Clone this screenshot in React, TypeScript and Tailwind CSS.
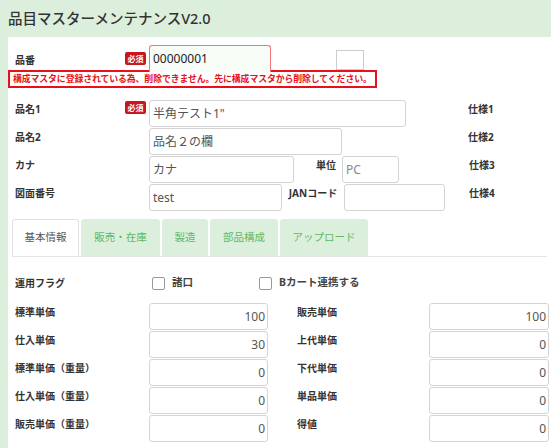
import React from "react";

const F = { fontFamily: '"Noto Sans", "Noto Sans CJK JP", sans-serif' };

function Badge() {
  return (
    <span className="flex h-[13px] w-[21px] items-center justify-center rounded-[2px] bg-[#c8161d] text-[8px] font-bold leading-none text-white">
      必須
    </span>
  );
}

function Input({ w, value, gray, right }: { w: number; value?: string; gray?: boolean; right?: boolean }) {
  return (
    <div
      className={`flex h-[27px] shrink-0 items-center rounded-[3px] border border-[#d4d4d4] bg-white px-[3px] text-[12px] ${
        gray ? "text-[#888]" : "text-[#555]"
      } ${right ? "justify-end pr-[2px]" : ""}`}
      style={{ width: w }}
    >
      {value}
    </div>
  );
}

function Label({ children, w = 110 }: { children: React.ReactNode; w?: number }) {
  return (
    <div className="shrink-0 pt-[2px] text-[10px] font-bold leading-[14px] text-[#333]" style={{ width: w }}>
      {children}
    </div>
  );
}

function Check({ label }: { label: string }) {
  return (
    <div className="flex items-center gap-[7px]">
      <span className="h-[13px] w-[13px] rounded-[2px] border border-[#999] bg-white" />
      <span className="text-[10.5px] font-bold text-[#444]">{label}</span>
    </div>
  );
}

export default function App() {
  const leftPrices: [string, string][] = [
    ["標準単価", "100"],
    ["仕入単価", "30"],
    ["標準単価（重量）", "0"],
    ["仕入単価（重量）", "0"],
    ["販売単価（重量）", "0"],
  ];
  const rightPrices: [string, string][] = [
    ["販売単価", "100"],
    ["上代単価", "0"],
    ["下代単価", "0"],
    ["単品単価", "0"],
    ["得値", "0"],
  ];
  return (
    <div className="h-[448px] w-[551px] overflow-hidden bg-[#dcefdc]" style={F}>
      <div className="flex h-[37px] items-center pl-[8px] text-[14.5px] font-medium text-[#333]">
        品目マスターメンテナンスV2.0
      </div>
      <div className="ml-[8px] h-[411px] bg-white">
        {/* 品番 */}
        <div className="flex pt-[8px]">
          <div className="flex w-[141px] shrink-0 items-center pl-[7px]">
            <span className="w-[110px] pt-[4px] text-[10px] font-bold text-[#333]">品番</span>
            <Badge />
          </div>
          <div className="h-[27px] w-[122px]">
            <div className="flex h-[27px] items-center rounded-t-[3px] border border-b-0 border-[#ee7777] bg-[#f7fcf7] px-[3px] text-[12px] text-[#222]">
              00000001
            </div>
          </div>
          <div className="ml-[65px] mt-[5px] h-[20px] w-[28px] border border-[#ccc] bg-white" />
        </div>
        {/* error */}
        <div className="-mt-[2px] flex h-[18px] w-[369px] items-center border-2 border-[#e8101a] bg-white pl-[3px] text-[8.9px] font-bold tracking-[-0.1px] text-[#e8101a]">
          構成マスタに登録されている為、削除できません。先に構成マスタから削除してください。
        </div>
        {/* rows */}
        <div className="mt-[12px] flex flex-col gap-[1px] pl-[7px]">
          <div className="flex">
            <div className="flex w-[134px] shrink-0 items-start">
              <Label w={110}>品名1</Label>
              <div className="mt-[1px]"><Badge /></div>
            </div>
            <Input w={257} value={'半角テスト1"'} />
            <div className="ml-[62px]"><Label>仕様1</Label></div>
          </div>
          <div className="flex">
            <Label w={134}>品名2</Label>
            <Input w={193} value="品名２の欄" />
            <div className="ml-[126px]"><Label>仕様2</Label></div>
          </div>
          <div className="flex">
            <Label w={134}>カナ</Label>
            <Input w={145} value="カナ" />
            <div className="w-[48px] shrink-0 pr-[6px] pt-[2px] text-right text-[10px] font-bold leading-[14px] text-[#333]">単位</div>
            <Input w={57} value="PC" gray />
            <div className="ml-[70px]"><Label>仕様3</Label></div>
          </div>
          <div className="flex">
            <Label w={134}>図面番号</Label>
            <Input w={133} value="test" />
            <div className="flex w-[62px] shrink-0 justify-center pt-[2px] text-[10px] font-bold leading-[14px] text-[#333]">JANコード</div>
            <Input w={101} />
            <div className="ml-[24px]"><Label>仕様4</Label></div>
          </div>
        </div>
        {/* tabs */}
        <div className="mx-[4px] mt-[8px] flex h-[38px] items-stretch gap-[2px] border-b border-[#e4e4e4] text-[10.5px]">
          <div className="flex w-[67px] items-center justify-center rounded-t-[3px] border border-b-0 border-[#e0e0e0] bg-white text-[#555]">基本情報</div>
          <div className="flex w-[79px] items-center justify-center rounded-t-[3px] bg-[#dcefdc] text-[#62b862]">販売・在庫</div>
          <div className="flex w-[46px] items-center justify-center rounded-t-[3px] bg-[#dcefdc] text-[#62b862]">製造</div>
          <div className="flex w-[68px] items-center justify-center rounded-t-[3px] bg-[#dcefdc] text-[#62b862]">部品構成</div>
          <div className="flex w-[88px] items-center justify-center rounded-t-[3px] bg-[#dcefdc] text-[#62b862]">アップロード</div>
        </div>
        {/* 運用フラグ */}
        <div className="mt-[16px] flex h-[20px] items-center pl-[7px]">
          <span className="w-[137px] text-[10px] font-bold text-[#333]">運用フラグ</span>
          <div className="w-[107px]"><Check label="諸口" /></div>
          <Check label="Bカート連携する" />
        </div>
        {/* prices */}
        <div className="mt-[10px] flex pl-[7px]">
          <div className="flex w-[282px] flex-col gap-[1px]">
            {leftPrices.map(([l, v]) => (
              <div key={l} className="flex">
                <Label w={134}>{l}</Label>
                <Input w={119} value={v} right />
              </div>
            ))}
          </div>
          <div className="flex flex-col gap-[1px]">
            {rightPrices.map(([l, v]) => (
              <div key={l} className="flex">
                <Label w={132}>{l}</Label>
                <Input w={120} value={v} right />
              </div>
            ))}
          </div>
        </div>
      </div>
    </div>
  );
}
